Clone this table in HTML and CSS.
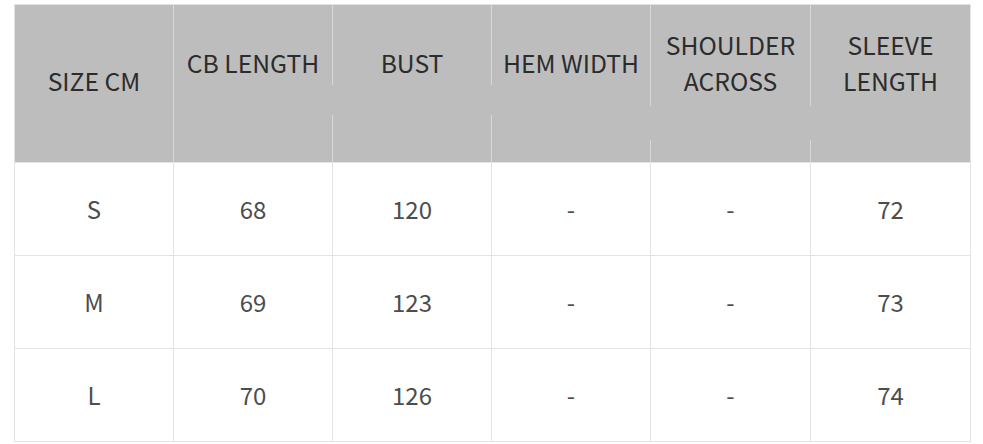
FILE: index.html
```html
<!DOCTYPE html>
<html lang="en">
<head>
<meta charset="utf-8">
<title>Size chart</title>
<link rel="stylesheet" href="styles.css">
</head>
<body>
<table class="size-table">
  <colgroup>
    <col class="c"><col class="c"><col class="c"><col class="c"><col class="cw"><col class="cw">
  </colgroup>
  <thead>
    <tr>
      <th class="h h-size">SIZE CM</th>
      <th class="h h-top gap-a">CB LENGTH</th>
      <th class="h h-top gap-a">BUST</th>
      <th class="h h-top gap-b">HEM WIDTH</th>
      <th class="h h-top gap-b">SHOULDER<br>ACROSS</th>
      <th class="h h-top">SLEEVE<br>LENGTH</th>
    </tr>
  </thead>
  <tbody>
    <tr><td>S</td><td>68</td><td>120</td><td>-</td><td>-</td><td>72</td></tr>
    <tr><td>M</td><td>69</td><td>123</td><td>-</td><td>-</td><td>73</td></tr>
    <tr><td>L</td><td>70</td><td>126</td><td>-</td><td>-</td><td>74</td></tr>
  </tbody>
</table>
</body>
</html>
```
FILE: styles.css
```css
html, body {
  margin: 0;
  padding: 0;
  background: #ffffff;
}
body {
  padding: 4px 0 0 14px;
  font-family: "Noto Sans CJK KR", "Noto Sans", sans-serif;
}
.size-table {
  border-collapse: separate;
  border-spacing: 0;
  table-layout: fixed;
  width: 957px;
  border-top: 1px solid #e3e3e3;
  border-left: 1px solid #e3e3e3;
}
.c { width: 159px; }
.cw { width: 160px; }
.size-table th,
.size-table td {
  border-right: 1px solid #e3e3e3;
  border-bottom: 1px solid #e3e3e3;
  padding: 0;
  text-align: center;
}
.size-table .h {
  height: 158px;
  background-color: #bdbdbd;
  color: #2c2c2c;
  font-weight: 400;
  font-size: 24.7px;
  line-height: 36px;
  border-right-color: #d8d8d8;
  box-sizing: border-box;
  vertical-align: middle;
}
.size-table .h:last-child {
  border-right-color: #e3e3e3;
}
.size-table .h-size {
  padding-bottom: 8px;
}
.size-table .h-top {
  padding-bottom: 44px;
}
.size-table .gap-a,
.size-table .gap-b {
  border-right-color: transparent;
  background-origin: border-box;
  background-clip: border-box;
  background-repeat: no-repeat;
}
.size-table .gap-a {
  background-image: linear-gradient(#d8d8d8, #d8d8d8), linear-gradient(#d8d8d8, #d8d8d8);
  background-size: 1px 80px, 1px 48px;
  background-position: right top, right bottom;
}
.size-table .gap-b {
  background-image: linear-gradient(#d8d8d8, #d8d8d8), linear-gradient(#d8d8d8, #d8d8d8);
  background-size: 1px 101px, 1px 23px;
  background-position: right top, right bottom;
}
.size-table td {
  height: 92px;
  color: #4d4d4d;
  font-size: 24px;
  line-height: 30px;
  vertical-align: middle;
}
```
